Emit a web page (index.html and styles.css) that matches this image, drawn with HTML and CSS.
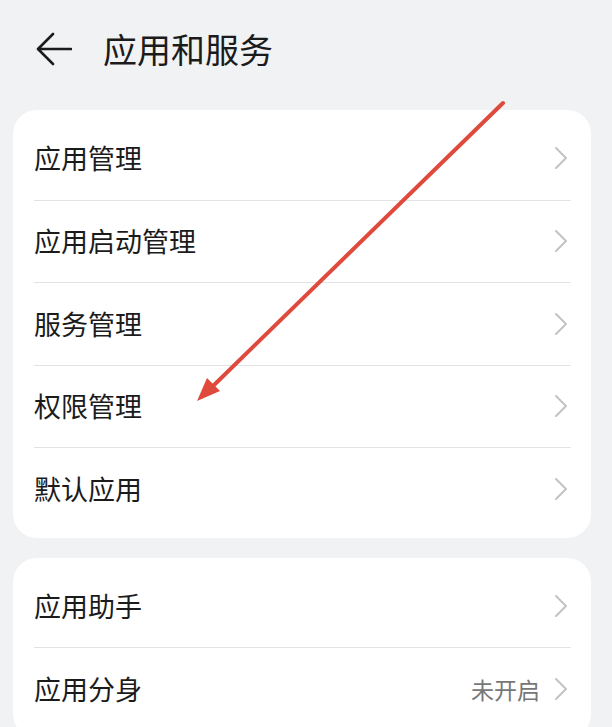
FILE: index.html
```html
<!DOCTYPE html>
<html lang="zh-CN">
<head>
<meta charset="utf-8">
<title>应用和服务</title>
<link rel="stylesheet" href="styles.css">
</head>
<body>
<div class="page">
  <header class="header">
    <svg class="back" width="36" height="34" viewBox="0 0 36 34">
      <path d="M35 17H3M17 2L2 17L17 32" fill="none" stroke="#1b1b1b" stroke-width="2.6" stroke-linecap="round" stroke-linejoin="round"/>
    </svg>
    <h1 class="title">应用和服务</h1>
  </header>

  <section class="card">
    <div class="row"><span class="label">应用管理</span><svg class="chev" width="14" height="24" viewBox="0 0 14 24"><path d="M2 2L12 12L2 22" fill="none" stroke="#c3c3c3" stroke-width="2" stroke-linecap="round" stroke-linejoin="round"/></svg></div>
    <div class="row"><span class="label">应用启动管理</span><svg class="chev" width="14" height="24" viewBox="0 0 14 24"><path d="M2 2L12 12L2 22" fill="none" stroke="#c3c3c3" stroke-width="2" stroke-linecap="round" stroke-linejoin="round"/></svg></div>
    <div class="row"><span class="label">服务管理</span><svg class="chev" width="14" height="24" viewBox="0 0 14 24"><path d="M2 2L12 12L2 22" fill="none" stroke="#c3c3c3" stroke-width="2" stroke-linecap="round" stroke-linejoin="round"/></svg></div>
    <div class="row"><span class="label">权限管理</span><svg class="chev" width="14" height="24" viewBox="0 0 14 24"><path d="M2 2L12 12L2 22" fill="none" stroke="#c3c3c3" stroke-width="2" stroke-linecap="round" stroke-linejoin="round"/></svg></div>
    <div class="row"><span class="label">默认应用</span><svg class="chev" width="14" height="24" viewBox="0 0 14 24"><path d="M2 2L12 12L2 22" fill="none" stroke="#c3c3c3" stroke-width="2" stroke-linecap="round" stroke-linejoin="round"/></svg></div>
  </section>

  <section class="card">
    <div class="row"><span class="label">应用助手</span><svg class="chev" width="14" height="24" viewBox="0 0 14 24"><path d="M2 2L12 12L2 22" fill="none" stroke="#c3c3c3" stroke-width="2" stroke-linecap="round" stroke-linejoin="round"/></svg></div>
    <div class="row"><span class="label">应用分身</span><span class="value">未开启</span><svg class="chev" width="14" height="24" viewBox="0 0 14 24"><path d="M2 2L12 12L2 22" fill="none" stroke="#c3c3c3" stroke-width="2" stroke-linecap="round" stroke-linejoin="round"/></svg></div>
  </section>

  <svg class="annot" width="612" height="727" viewBox="0 0 612 727">
    <line x1="503" y1="103" x2="211" y2="388" stroke="#df4a3d" stroke-width="4" stroke-linecap="round"/>
    <polygon points="197,401 220,391 207,378" fill="#df4a3d"/>
  </svg>
</div>
</body>
</html>
```

FILE: styles.css
```css
html, body {
  margin: 0;
  padding: 0;
}
body {
  background: #f1f2f4;
  font-family: "Noto Sans CJK SC", "Noto Sans", sans-serif;
  color: #1b1b1b;
}
.page {
  position: relative;
  width: 612px;
  height: 727px;
  overflow: hidden;
}
.header {
  height: 110px;
  display: flex;
  align-items: center;
  padding: 0 0 12px 36px;
  box-sizing: border-box;
}
.back {
  display: block;
  flex: none;
}
.title {
  margin: 0 0 0 31px;
  font-size: 34px;
  font-weight: 400;
  line-height: 40px;
  color: #1b1b1b;
}
.card {
  margin: 0 21px 20px 13px;
  background: #ffffff;
  border-radius: 24px;
  padding: 7px 0 8px 0;
}
.row {
  display: flex;
  align-items: center;
  height: 82.5px;
  margin: 0 20px 0 21px;
  box-sizing: border-box;
}
.row + .row {
  border-top: 1px solid #e3e3e3;
}
.label {
  flex: 1;
  font-size: 27px;
  line-height: 36px;
  color: #1b1b1b;
}
.value {
  font-size: 23px;
  line-height: 30px;
  color: #777777;
  margin-right: 14px;
}
.chev {
  display: block;
  flex: none;
  margin-right: 3px;
}
.annot {
  position: absolute;
  left: 0;
  top: 0;
  pointer-events: none;
}
```
